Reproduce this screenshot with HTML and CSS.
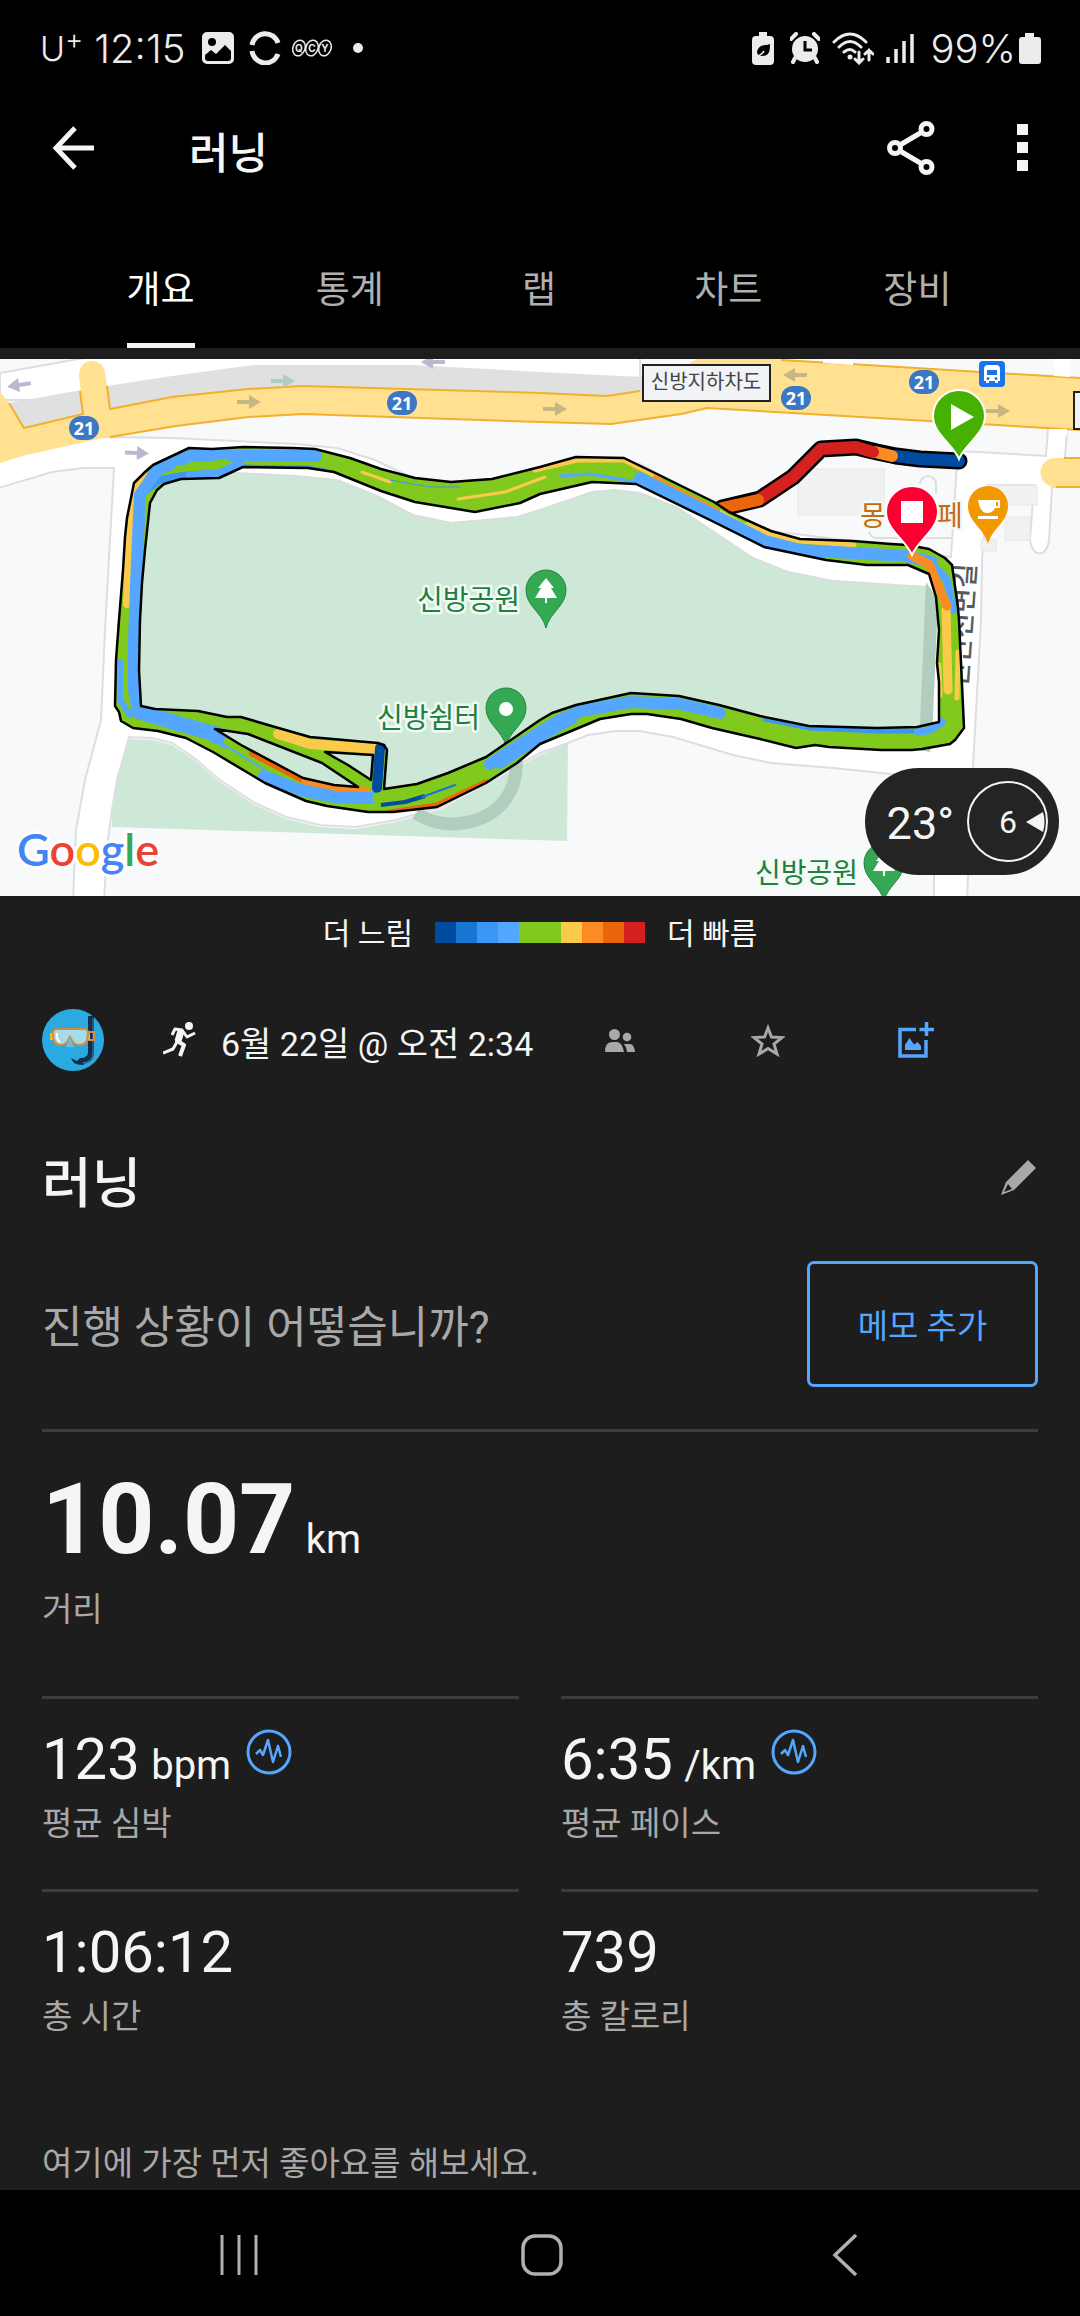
FILE: index.html
```html
<!DOCTYPE html>
<html lang="ko">
<head>
<meta charset="UTF-8">
<meta name="viewport" content="width=device-width, initial-scale=1.0">
<title>러닝</title>
<link rel="stylesheet" href="styles.css">
</head>
<body>

<div class="status">
  <span class="carrier">U<sup>+</sup></span>
  <span class="clock">12:15</span>
  <svg class="st-photo" width="32" height="32" viewBox="0 0 32 32"><path fill="#ececec" fill-rule="evenodd" d="M5 0h22a5 5 0 0 1 5 5v22a5 5 0 0 1-5 5H5a5 5 0 0 1-5-5V5a5 5 0 0 1 5-5zM10 6a4 4 0 1 0 0 8a4 4 0 0 0 0-8zM3 23v3q0 3 3 3h20q3 0 3-3v-7l-6-6l-9 9l-5-4z"/></svg>
  <svg class="st-ring" width="32" height="34" viewBox="0 0 32 34"><path d="M3 14A13.500 14 0 0 1 29 12M3 20A13.500 14 0 0 0 29 23" fill="none" stroke="#ececec" stroke-width="5"/></svg>
  <svg class="st-qcy" width="40" height="18" viewBox="0 0 40 18"><g fill="none" stroke="#ececec" stroke-width="1.500"><ellipse cx="7" cy="9" rx="6" ry="8" transform="rotate(20 7 9)"/><ellipse cx="20" cy="9" rx="6" ry="8" transform="rotate(20 20 9)"/><ellipse cx="33" cy="9" rx="6" ry="8" transform="rotate(20 33 9)"/></g><g class="qcy"><text x="7" y="13">Q</text><text x="20" y="13">C</text><text x="33" y="13">Y</text></g></svg>
  <span class="dot"></span>

  <div class="status-right">
    <svg width="22" height="33" viewBox="0 0 22 33"><path fill="#ececec" d="M7 0h8v4h3q4 0 4 4v21q0 4-4 4H4q-4 0-4-4V8q0-4 4-4h3z"/><path d="M18 12c0 8-1 12-8 12c-5 0-6-4-4-7c3-5 7-3 12-5z"/><path d="M3 25q6-1 9-6" fill="none" stroke="#ececec" stroke-width="1.500"/></svg>
    <svg width="30" height="32" viewBox="0 0 30 32"><circle cx="15" cy="17" r="13" fill="#ececec"/><path d="M1 7l5-5M29 7l-5-5M5 26l-2 4M25 26l2 4" stroke="#ececec" stroke-width="4" stroke-linecap="round"/><path d="M15 9v9h7" fill="none" stroke="#000" stroke-width="3"/></svg>
    <svg width="42" height="33" viewBox="0 0 42 33"><g fill="none" stroke="#ececec" stroke-width="3" stroke-linecap="round"><path d="M2 10q16-16 32 0M7 15q11-11 22 0M12 20q6-5 11 0"/><path d="M27 20v10M23 27l4 4l4-4M37 28V18M33 22l4-4l4 4"/></g><circle cx="18" cy="25" r="2.500" fill="#ececec"/></svg>
    <svg width="28" height="31" viewBox="0 0 28 31"><path d="M2 24v6M10 16v14M18 8v22M26 1v29" stroke="#ececec" stroke-width="3.500"/></svg>
    <span class="percent">99%</span>
    <svg class="battery" width="22" height="31" viewBox="0 0 22 31"><path fill="#ececec" d="M6 0h9v4h4q3 0 3 3v21q0 3-3 3H3q-3 0-3-3V7q0-3 3-3h3z"/></svg>
  </div>
</div>

<header class="appbar">
  <button type="button" aria-label="뒤로">
    <svg width="44" height="44" viewBox="0 0 44 44"><path d="M42 22H5M23 2L4 22L23 42" fill="none" stroke="#f5f5f5" stroke-width="5"/></svg>
  </button>
  <h1>러닝</h1>
  <button type="button" aria-label="공유">
    <svg width="48" height="54" viewBox="0 0 48 54"><g fill="none" stroke="#f5f5f5" stroke-width="5"><circle cx="8" cy="27" r="5.500"/><circle cx="39.500" cy="8" r="5.500"/><circle cx="39.500" cy="46" r="5.500"/><path d="M13 24L35 11M13 30L35 43"/></g></svg>
  </button>
  <button type="button" class="more" aria-label="더보기">
    <svg width="12" height="48" viewBox="0 0 12 48"><path fill="#f5f5f5" d="M0 0h11v11H0zM0 18h11v11H0zM0 36h11v11H0z"/></svg>
  </button>
</header>

<nav class="tabs">
  <a href="#overview" class="active">개요</a>
  <a href="#stats">통계</a>
  <a href="#laps">랩</a>
  <a href="#charts">차트</a>
  <a href="#gear">장비</a>
</nav>

<main>
  <div class="map">
    <svg class="map-canvas" viewBox="0 359 1080 537">
      <defs>
        <path id="route" d="M189 448L212 449L244 447L293 448L315 449L350 458L381 469L415 478L451 482L492 479L540 467L576 457L624 458L661 476L714 502L729 512L771 531L800 539L853 541L891 544L908 545L929 549L945 558L952 565L958 608L959 620L961 663L964 728L955 740L950 744L922 749L912 750L881 750L829 747L815 745L796 748L760 739L712 728L681 719L647 714L631 714L600 719L540 744L517 763L486 783L437 807L393 812L368 812L327 806L306 801L265 783L213 752L186 738L158 731L133 728L121 721L119 712L115 706L116 660L119 620L123 570L125 537L127 518L134 483L145 472L153 465Z
          M243 467L308 468L334 472L381 491L415 502L475 512L520 503L540 494L592 482L636 484L712 521L764 547L826 560L867 565L908 565L929 574L936 597L939 630L937 663L939 682L939 722L917 727L877 728L809 726L760 716L719 705L679 696L631 693L576 705L552 713L540 720L486 757L448 773L417 784L384 789L387 750L384 745L378 743L310 737L275 727L241 717L227 717L198 711L155 709L141 706L139 670L140 620L142 583L145 550L150 503L157 490L164 484L181 479L219 478Z
          M215 729L248 734L322 763L358 787L334 785L303 778L241 745Z
          M325 752L373 755L371 780L348 765Z"/>
        <clipPath id="route-clip"><use href="#route" clip-rule="evenodd"/></clipPath>
        <g id="arrow"><path d="M-12-2H0V-7L12 0L0 7V2H-12z"/></g>
        <path id="pin-shape" d="M0 38C-4 22-20 16-20 0A20 20 0 0 1 20 0C20 16 4 22 0 38Z"/>
        <path id="tree" d="M0-12L8-2H5L11 8H1V13H-1V8H-11L-5-2H-8Z" fill="#fff"/>
        <path id="track-pin" d="M0 43C-6 28-26 18-26 0A26 26 0 0 1 26 0C26 18 6 28 0 43Z"/>
      </defs>

      <rect x="0" y="359" width="1080" height="537" fill="#f8f9fb"/>

      <!-- local roads -->
      <g fill="#fff" stroke="#dcdee0" stroke-width="2">
        <path d="M0 373L84 358H640V400H0Z"/>
        <path fill-rule="evenodd" d="M-5 440L107 437L172 438L296 444L337 448L375 460L413 478L451 482L492 479L576 457L640 464L690 490L725 512L771 531L853 541L951 557L957 463L960 451L1046 456L1048 428L1067 430L1065 458H1090V487H1052L1049 540C1047 558 1032 558 1030 540L1034 485H988L982 560L981 620L973 767L967 900H934L934 875L930 776L891 774L833 768L771 763L733 755L673 737L640 731L616 731L588 735L568 743L540 753L441 807L396 820L355 827L320 825L286 817L255 803L220 780L193 757L172 743L152 738L129 737L117 780L112 810L107 847L104 900H73L76 830L85 780L101 720L105 630L114 468H83L52 472L-5 489Z"/>
      </g>
      <path fill="none" stroke="#dcdee0" stroke-width="2" d="M920 484a8 8 0 0 1 16 0v10M869 532q2 6 8 6H953"/>
      <g fill="#f1f1f1" stroke="#e6e6e6"><path d="M798 469h86v46h-86zM988 485h49v20h-49zM1005 517h25v23h-25zM981 540h15v11h-15z"/></g>

      <!-- parks -->
      <path fill="#cde8d6" stroke="#d9dedb" stroke-width="2" d="M140 490L185 474L238 473L296 476L337 480L375 495L413 515L451 523L517 517L540 510L592 492L615 490L640 493L678 508L753 558L788 572L833 581L926 587L920 736L800 735L640 705L570 715L520 745L440 790L380 800L260 770L180 722L128 715Z"/>
      <path fill="#cde8d6" d="M129 739L152 740L172 745L193 759L220 782L255 805L286 819L320 827L355 829L396 822L441 809L540 755L568 743L567 841L112 827L112 812L117 782Z"/>
      <path fill="#b0cdbe" d="M926 582L938 600L932 740L930 752L919 750Z"/>
      <path fill="none" stroke="#b0cdbe" stroke-width="13" d="M416 813Q436 827 463 823T505 800Q518 782 516 760"/>

      <!-- highway -->
      <path fill="#e0e0e0" d="M9 403L81 390L107 386L172 376L253 365L413 365L540 372L643 377V392L610 396L540 393L303 386L248 389L172 397L110 409L24 428Z"/>
      <path fill="#ffe191" d="M0 392L9 403L24 428L83 414L79 375A13 13 0 0 1 105 373L110 409L172 397L248 389L303 386L540 393L607 396L640 391L697 359L781 359L850 364L1080 378V430L707 408L681 414L611 424L540 422L303 414L248 417L176 426L107 437L26 455L0 463Z"/>
      <path fill="none" stroke="#f2b02c" stroke-width="2" d="M9 403L24 428L83 414L80 391M107 386L110 409L172 397L248 389L303 386L540 393L607 396L640 391M781 360L850 364L1080 378M110 437L176 426L248 417L303 414L540 422L611 424L681 414L707 408L1080 430"/>
      <path fill="#fff" d="M823 359h30v6l-30-2zM1054 359h16v18l-16-1zM1049 429h18v6h-18z"/>
      <path fill="#ffe191" d="M1090 458H1055A14 14 0 0 0 1055 487H1090"/>
      <path fill="none" stroke="#f2b02c" stroke-width="2" d="M1064 458H1090M1056 487H1090"/>
      <g fill="#bab9cf">
        <use href="#arrow" transform="translate(19 385) rotate(172)"/>
        <use href="#arrow" transform="translate(433 362) rotate(180)"/>
        <use href="#arrow" transform="translate(137 453) rotate(2)"/>
      </g>
      <use href="#arrow" transform="translate(283 381)" fill="#b0cdbe"/>
      <g fill="#c6b683">
        <use href="#arrow" transform="translate(249 402)"/>
        <use href="#arrow" transform="translate(555 409)"/>
        <use href="#arrow" transform="translate(795 375) rotate(180)"/>
        <use href="#arrow" transform="translate(998 411)"/>
      </g>

      <g class="shield">
        <rect x="69" y="416" width="30" height="24" rx="12"/><text x="84" y="435">21</text>
        <rect x="387" y="391" width="30" height="24" rx="12"/><text x="402" y="410">21</text>
        <rect x="781" y="386" width="30" height="24" rx="12"/><text x="796" y="405">21</text>
        <rect x="909" y="370" width="30" height="24" rx="12"/><text x="924" y="389">21</text>
      </g>
      <rect x="643" y="365" width="127" height="36" fill="#f1f3f6" stroke="#222" stroke-width="2"/>
      <text class="box-label" x="706" y="389">신방지하차도</text>
      <rect x="1074" y="392" width="20" height="37" fill="#f1f3f6" stroke="#222" stroke-width="2"/>
      <rect x="979" y="361" width="26" height="26" rx="4" fill="#1a73e8"/>
      <path fill="#fff" fill-rule="evenodd" d="M988 365h8q4 0 4 4v12h-2v2h-3v-2h-6v2h-3v-2h-2v-12q0-4 4-4zM987 370v5h10v-5zM988 377a1 1 0 1 0 0 3a1 1 0 0 0 0-3zM996 377a1 1 0 1 0 0 3a1 1 0 0 0 0-3z"/>
      <text class="street" transform="translate(967 688) rotate(-86)">신안천변길</text>

      <!-- places -->
      <g fill="#34a853" stroke="#23873f" stroke-width="1">
        <use href="#pin-shape" x="546" y="590"/>
        <use href="#pin-shape" x="506" y="708"/>
        <use href="#pin-shape" x="884" y="863"/>
      </g>
      <use href="#tree" x="546" y="590"/>
      <use href="#tree" x="884" y="863"/>
      <circle cx="506" cy="709" r="7" fill="#fff"/>
      <g class="place">
        <text x="417" y="610">신방공원</text>
        <text x="377" y="728">신방쉼터</text>
        <text x="755" y="883">신방공원</text>
      </g>
      <g class="place food"><text x="860" y="526">몽</text><text x="937" y="526">페</text></g>
      <use href="#pin-shape" x="988" y="506" fill="#f29900"/>
      <path fill="#fff" fill-rule="evenodd" d="M978 500h18v0h4v8h-5q-2 5-8 5q-7 0-9-13zM996 502v4h2v-4zM978 516h20v3h-20z"/>

      <!-- start of the run -->
      <g fill="none" stroke-linecap="round" stroke-linejoin="round">
        <path stroke="#000" stroke-width="17" d="M722 508L760 499L793 477L821 449L856 447L877 452L896 456L920 459L959 461"/>
        <path stroke="#004a9f" stroke-width="12" d="M896 456L920 459L959 461"/>
        <path stroke="#fb8b24" stroke-width="12" d="M875 452L892 456"/>
        <path stroke="#d4211f" stroke-width="12" d="M760 499L793 477L821 449L856 447L873 452"/>
        <path stroke="#eb660b" stroke-width="12" d="M722 508L758 500"/>
      </g>

      <!-- laps -->
      <use href="#route" fill="#81c91d" fill-rule="evenodd"/>
      <g clip-path="url(#route-clip)" fill="none" stroke-linecap="round" stroke-linejoin="round">
        <path stroke="#fbca4b" stroke-width="8" d="M143 474L133 492L129 540L127 604"/>
        <path stroke="#54a6ff" stroke-width="6" d="M120 662L120 700L130 715"/>
        <path stroke="#3c96f5" stroke-width="7" d="M144 492L160 480L182 475L222 473"/>
        <path stroke="#3c96f5" stroke-width="3" d="M243 466L308 467L325 470"/>
        <path stroke="#54a6ff" stroke-width="9" d="M190 476L218 474L240 464"/>
        <path stroke="#54a6ff" stroke-width="12" d="M138 712L134 690L134 640L137 560L140 495L157 470L190 456L316 456"/>
        <path stroke="#81c91d" stroke-width="7" d="M178 469L205 466L225 462"/>
        <path stroke="#fbca4b" stroke-width="3" d="M458 499L505 492L545 477M362 472L390 482"/>
        <path stroke="#3c96f5" stroke-width="1" d="M390 480L430 487L460 487M410 471L440 478"/>
        <path stroke="#fbca4b" stroke-width="5" d="M535 470L577 460L624 460L660 478L714 506L771 535L800 541L854 545"/>
        <path stroke="#fb8b24" stroke-width="4" d="M655 477L718 510"/>
        <path stroke="#81c91d" stroke-width="6" d="M665 478L714 503L745 520M545 473L590 466L628 470"/>
        <path stroke="#54a6ff" stroke-width="3" d="M560 476L590 474L660 486"/>
        <path stroke="#54a6ff" stroke-width="12" d="M640 478L712 514L765 541L800 550L905 556L932 562"/>
        <path stroke="#54a6ff" stroke-width="8" d="M932 564L947 580L953 610"/>
        <path stroke="#fbca4b" stroke-width="9" d="M946 610L948 690"/>
        <path stroke="#fbca4b" stroke-width="5" d="M958 652L957 698M939 665L940 695"/>
        <path stroke="#fb8b24" stroke-width="9" d="M912 556L929 564L947 606"/>
        <path stroke="#3c96f5" stroke-width="5" d="M765 719L810 728L877 731L920 731"/>
        <path stroke="#54a6ff" stroke-width="8" d="M918 732L930 730L942 722"/>
        <path stroke="#54a6ff" stroke-width="12" d="M490 764L540 732L556 722L580 711L631 702L680 704L720 713"/>
        <path stroke="#54a6ff" stroke-width="6" d="M500 766L540 740L575 720"/>
        <path stroke="#eb660b" stroke-width="7" d="M390 813L437 806L486 783M241 747L303 780"/>
        <path stroke="#fb8b24" stroke-width="7" d="M305 781L334 788L375 791"/>
        <path stroke="#54a6ff" stroke-width="15" d="M140 712L180 724L212 733L222 742"/>
        <path stroke="#54a6ff" stroke-width="9" d="M195 729L218 731L226 737"/>
        <path stroke="#81c91d" stroke-width="9" d="M215 748L265 778M228 742L245 752"/>
        <path stroke="#54a6ff" stroke-width="2" d="M225 745L265 770"/>
        <path stroke="#54a6ff" stroke-width="12" d="M264 776L300 790L335 797L378 798"/>
        <path stroke="#81c91d" stroke-width="10" d="M325 753L375 787"/>
        <path stroke="#fbca4b" stroke-width="10" d="M278 734L310 744L377 749"/>
        <path stroke="#004a9f" stroke-width="10" d="M380 748L377 788"/>
        <path stroke="#81c91d" stroke-width="11" d="M378 798L420 792L450 780"/>
        <path stroke="#004a9f" stroke-width="4" stroke-linecap="butt" d="M381 805L405 802L425 796"/>
        <path stroke="#1976d2" stroke-width="2" d="M422 797L455 785"/>
      </g>
      <use href="#route" fill="none" stroke="#000" stroke-width="2.500" stroke-linejoin="round"/>

      <g stroke="#fff" stroke-width="2">
        <use href="#track-pin" x="959" y="416" fill="#46b100"/>
        <use href="#track-pin" x="912" y="512" fill="#fb0030"/>
      </g>
      <path fill="#fff" d="M951 404L974 417L951 430zM901 501h22v22h-22z"/>

      <text class="google" x="17" y="866"><tspan fill="#4285f4">G</tspan><tspan fill="#ea4335">o</tspan><tspan fill="#fbbc05">o</tspan><tspan fill="#4285f4">g</tspan><tspan fill="#34a853">l</tspan><tspan fill="#ea4335">e</tspan></text>
    </svg>

    <div class="weather">
      <span class="temp">23°</span>
      <div class="wind">
        <span>6</span>
        <svg width="20" height="20" viewBox="0 0 20 20"><path fill="#f5f5f5" d="M0 10L17 0Q20 10 17 20z"/></svg>
      </div>
    </div>
  </div>

  <div class="legend">
    <span>더 느림</span>
    <div class="scale">
      <i class="s1"></i><i class="s2"></i><i class="s3"></i><i class="s4"></i><i class="s5"></i>
      <i class="s5"></i><i class="s6"></i><i class="s7"></i><i class="s8"></i><i class="s9"></i>
    </div>
    <span>더 빠름</span>
  </div>

  <div class="content">
    <div class="meta">
      <svg class="avatar" width="62" height="62" viewBox="0 0 62 62">
        <circle cx="31" cy="31" r="31" fill="#2baae2"/>
        <path fill="none" stroke="#10304f" stroke-width="6" d="M49 7V43Q49 52 38 52"/>
        <path fill="#10304f" d="M29 49l6 3l3-3l4 3v4q-9 0-11-3z"/>
        <path fill="none" stroke="#5d7488" stroke-width="1" d="M51 9V43Q51 53 41 54"/>
        <path fill="none" stroke="#d68a3c" stroke-width="2" d="M46 23h6v8h-6"/>
        <path fill="#fbb818" d="M8 24h4v7H8zM44 24h4v7h-4z"/>
        <path fill="#a4dcea" stroke="#d68a3c" stroke-width="2" d="M15 20H42Q46 20 46 24Q46 36 38 36Q33 36 31 33L28 28L25 33Q23 36 18 36Q11 36 11 24Q11 20 15 20Z"/>
        <path fill="#68bfe3" d="M28 28l4 10h-8z"/>
        <path fill="none" stroke="#fff" stroke-width="2" d="M15 24q-1 6 3 9"/>
      </svg>
      <svg class="runner" width="34" height="36" viewBox="0 0 34 36"><circle cx="26" cy="4" r="4" fill="#f5f5f5"/><g fill="none" stroke="#f5f5f5" stroke-linejoin="round"><path d="M18 9L14 19L21 23L17 34" stroke-width="4"/><path d="M9 13L12 7L19 8L24 15L32 11" stroke-width="3"/><path d="M14 20L10 27L0 31" stroke-width="3"/><path d="M18 9L15 19" stroke-width="7"/></g></svg>
      <span class="date">6월 22일 @ 오전 2:34</span>
      <div class="meta-actions">
        <button type="button" aria-label="공개 범위"><svg width="30" height="23" viewBox="0 0 30 23"><g fill="#a8a8a8"><circle cx="9.500" cy="5.500" r="5.500"/><circle cx="22" cy="8" r="4.300"/><path d="M0 23q0-10 7-10h5q5 0 7 10zM19 15h6q4 0 5 8h-8q0-4-3-8z"/></g></svg></button>
        <button type="button" aria-label="즐겨찾기"><svg width="34" height="33" viewBox="0 0 34 33"><path fill="none" stroke="#a8a8a8" stroke-width="3" d="M17 4L20.500 13L31 13.500L23 20L26 30L17 24.500L8 30L11 20L3 13.500L13.500 13Z"/></svg></button>
        <button type="button" aria-label="사진 추가"><svg width="36" height="36" viewBox="0 0 36 36"><path fill="none" stroke="#54a6ff" stroke-width="3.500" d="M18 7.500H2V34H28V18M28.500 0V14M21.500 7.500H36"/><path fill="#54a6ff" d="M7 28V23L11.500 16L16 22.500L19.500 20L23 24V28Z"/></svg></button>
      </div>
    </div>

    <div class="name">
      <h2>러닝</h2>
      <button type="button" aria-label="이름 편집"><svg width="36" height="36" viewBox="0 0 36 36"><path fill="#a8a8a8" fill-rule="evenodd" d="M28 0L36 8L14 30L1 35L6 22ZM8 24L4 32L12 29Z"/></svg></button>
    </div>

    <div class="note">
      <p>진행 상황이 어떻습니까?</p>
      <button type="button">메모 추가</button>
    </div>

    <dl class="distance">
      <dd>10.07 <small>km</small></dd>
      <dt>거리</dt>
    </dl>

    <div class="stats">
      <dl>
        <dd>123 <small>bpm</small><svg width="46" height="46" viewBox="0 0 46 46"><circle cx="23" cy="23" r="21" fill="none" stroke="#54a6ff" stroke-width="3"/><path fill="none" stroke="#54a6ff" stroke-width="2.500" stroke-linejoin="round" d="M10 25L14 21L17 26L22 11L27 33L32 17L35 28"/></svg></dd>
        <dt>평균 심박</dt>
      </dl>
      <dl>
        <dd>6:35 <small>/km</small><svg width="46" height="46" viewBox="0 0 46 46"><circle cx="23" cy="23" r="21" fill="none" stroke="#54a6ff" stroke-width="3"/><path fill="none" stroke="#54a6ff" stroke-width="2.500" stroke-linejoin="round" d="M10 25L14 21L17 26L22 11L27 33L32 17L35 28"/></svg></dd>
        <dt>평균 페이스</dt>
      </dl>
      <dl>
        <dd>1:06:12</dd>
        <dt>총 시간</dt>
      </dl>
      <dl>
        <dd>739</dd>
        <dt>총 칼로리</dt>
      </dl>
    </div>

    <p class="likes">여기에 가장 먼저 좋아요를 해보세요.</p>
  </div>
</main>

<footer class="sysnav">
  <button type="button" aria-label="최근 앱"><svg width="42" height="42" viewBox="0 0 42 42"><path d="M4 1V41M21 1V41M38 1V41" stroke="#b0b0b0" stroke-width="3"/></svg></button>
  <button type="button" aria-label="홈"><svg width="42" height="42" viewBox="0 0 42 42"><rect x="2" y="2" width="38" height="38" rx="12" fill="none" stroke="#b0b0b0" stroke-width="3.500"/></svg></button>
  <button type="button" aria-label="뒤로 가기"><svg width="42" height="42" viewBox="0 0 42 42"><path d="M32 1L11 21L32 41" fill="none" stroke="#b0b0b0" stroke-width="3.500"/></svg></button>
</footer>

</body>
</html>
```

FILE: styles.css
```css
* {
  box-sizing: border-box;
}

body {
  margin: 0;
  min-height: 100vh;
  display: flex;
  flex-direction: column;
  background-color: #000;
  color: #f5f5f5;
  font-family: Roboto, "Noto Sans CJK KR", sans-serif;
}

h1, h2, p, dl, dd {
  margin: 0;
}

button {
  display: flex;
  align-items: center;
  justify-content: center;
  padding: 0;
  border: none;
  background: none;
  font-family: inherit;
  cursor: pointer;
}

svg {
  display: block;
  flex: none;
}

/* status bar */
.status {
  display: flex;
  align-items: center;
  height: 96px;
  padding: 0 39px 0 40px;
  color: #ececec;
  font-family: Inter, sans-serif;
  font-size: 40px;
  font-weight: 300;
}

.carrier {
  font-size: 34px;
}

.carrier sup {
  font-size: 28px;
  line-height: 0;
}

.clock {
  margin: 0 17px 0 11px;
}

.st-ring {
  margin: 0 11px 0 15px;
}

.qcy {
  fill: #ececec;
  font-size: 10px;
  font-weight: 700;
  text-anchor: middle;
}

.dot {
  width: 10px;
  height: 10px;
  margin-left: 21px;
  border-radius: 50%;
  background-color: #ececec;
}

.status-right {
  display: flex;
  align-items: center;
  gap: 16px;
  margin-left: auto;
}

.status-right svg + svg + svg {
  margin-left: -4px;
}

.battery {
  margin-left: -13px;
}

/* app bar */
.appbar {
  display: flex;
  align-items: center;
  height: 104px;
  padding: 0 51px 0 52px;
}

.appbar h1 {
  flex: 1;
  padding-top: 3px;
  margin-left: 93px;
  font-size: 43px;
  font-weight: 500;
}

.more {
  margin-left: 82px;
}

.tabs {
  display: grid;
  grid-template-columns: repeat(5, 1fr);
  justify-items: center;
  height: 148px;
  padding: 0 68px 0 66px;
}

.tabs a {
  padding-top: 43px;
  border-bottom: 5px solid transparent;
  color: #b0b0b0;
  font-size: 37px;
  line-height: 96px;
  height: 148px;
  text-decoration: none;
}

.tabs .active {
  color: #fff;
  border-color: #f5f5f5;
}

main {
  flex: 1;
  padding-top: 11px;
  background-color: #1d1d1d;
}

/* map */
.map {
  position: relative;
}

.map-canvas {
  width: 100%;
}

.shield rect {
  fill: #3b77c5;
}

.shield text {
  fill: #fff;
  font-family: "Noto Sans", sans-serif;
  font-size: 18px;
  font-weight: 700;
  text-anchor: middle;
}

.box-label {
  fill: #444;
  font-size: 20px;
  text-anchor: middle;
}

.street {
  fill: #555a60;
  font-size: 27px;
  font-weight: 500;
}

.place {
  fill: #1e7f3e;
  stroke: #f2faf5;
  stroke-width: 5px;
  stroke-linejoin: round;
  paint-order: stroke;
  font-size: 28px;
}

.food {
  fill: #c76a12;
}

.google {
  font-family: Lato, sans-serif;
  font-size: 45px;
  font-weight: 600;
  stroke: #fff;
  stroke-width: 6px;
  stroke-linejoin: round;
  paint-order: stroke;
}

.weather {
  position: absolute;
  right: 21px;
  bottom: 21px;
  display: flex;
  align-items: center;
  gap: 13px;
  height: 107px;
  padding: 0 11px 0 22px;
  border-radius: 54px;
  background-color: #242424;
}

.temp {
  padding-top: 3px;
  font-size: 45px;
}

.wind {
  display: flex;
  align-items: center;
  justify-content: flex-end;
  gap: 9px;
  width: 81px;
  height: 81px;
  border: 2px solid #f5f5f5;
  border-radius: 50%;
  font-size: 32px;
}

.legend {
  display: flex;
  align-items: center;
  justify-content: center;
  gap: 22px;
  padding: 14px 0;
  font-size: 30px;
  line-height: 44px;
}

.legend span {
  padding-top: 3px;
  line-height: 41px;
}

.scale {
  display: flex;
}

.scale i {
  width: 21px;
  height: 21px;
}

.s1 { background-color: #004a9f; }
.s2 { background-color: #1976d2; }
.s3 { background-color: #3c96f5; }
.s4 { background-color: #54a6ff; }
.s5 { background-color: #81c91d; }
.s6 { background-color: #fbca4b; }
.s7 { background-color: #fb8b24; }
.s8 { background-color: #eb660b; }
.s9 { background-color: #d4211f; }

/* activity details */
.content {
  padding: 40px 42px 0;
}

.meta {
  display: flex;
  align-items: center;
  height: 64px;
}

.runner {
  margin: 0 24px 0 59px;
}

.date {
  padding-top: 2px;
  font-size: 34px;
  white-space: nowrap;
}

.meta-actions {
  display: grid;
  grid-template-columns: repeat(3, 148px);
  margin: 0 48px 0 auto;
}

.name {
  display: flex;
  align-items: center;
  justify-content: space-between;
  padding: 77px 2px 0 0;
}

.name h2 {
  font-size: 54px;
  font-weight: 500;
  line-height: 72px;
}

.name button {
  padding-bottom: 14px;
}

.note {
  display: flex;
  align-items: center;
  justify-content: space-between;
  padding: 40px 0 42px;
}

.note p {
  color: #a8a8a8;
  font-size: 44px;
}

.note button {
  width: 231px;
  height: 126px;
  border: 3px solid #54a6ff;
  border-radius: 7px;
  color: #54a6ff;
  font-size: 33px;
}

dl {
  display: flex;
  flex-direction: column;
  border-top: 3px solid #3c3c3c;
}

dt {
  color: #a8a8a8;
  font-size: 33px;
  line-height: 48px;
}

small {
  font-size: 40px;
  font-weight: 400;
}

.distance {
  gap: 10px;
  padding: 32px 0 62px;
}

.distance dd {
  height: 112px;
  font-size: 98px;
  font-weight: 700;
  line-height: 112px;
}

.distance small {
  margin-left: -14px;
}

.stats {
  display: grid;
  grid-template-columns: 1fr 1fr;
  column-gap: 42px;
}

.stats dl {
  gap: 7px;
  padding: 26px 0 41px;
}

.stats dd {
  height: 68px;
  font-size: 58px;
  line-height: 68px;
}

.stats small {
  margin-left: -3px;
}

.stats svg {
  display: inline-block;
  margin-left: 15px;
  vertical-align: 4px;
}

.likes {
  padding-top: 58px;
  color: #a8a8a8;
  font-size: 33px;
  line-height: 48px;
}

/* system navigation */
.sysnav {
  display: grid;
  grid-template-columns: repeat(3, 303px);
  justify-content: center;
  height: 126px;
  padding: 4px 0 0 4px;
}
```
